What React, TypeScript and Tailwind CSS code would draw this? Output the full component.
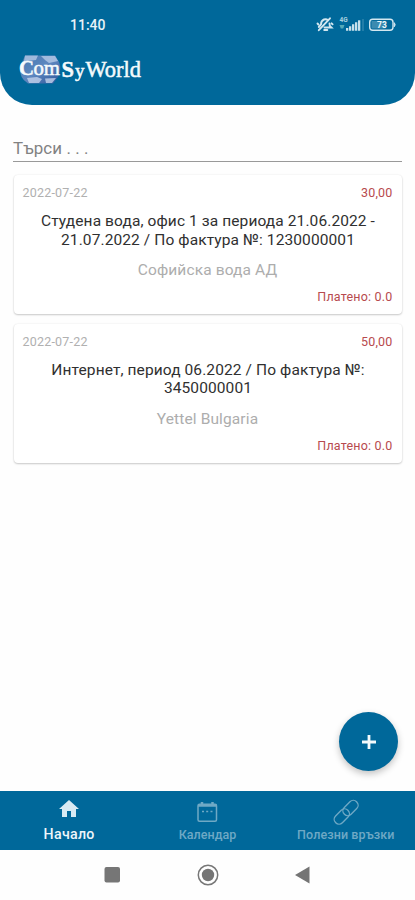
import React from "react";

type Bill = { date: string; amount: string; lines: string[]; company: string; paid: string };

const bills: Bill[] = [
  {
    date: "2022-07-22",
    amount: "30,00",
    lines: ["Студена вода, офис 1 за периода 21.06.2022 -", "21.07.2022 / По фактура №: 1230000001"],
    company: "Софийска вода АД",
    paid: "Платено: 0.0",
  },
  {
    date: "2022-07-22",
    amount: "50,00",
    lines: ["Интернет, период 06.2022 / По фактура №:", "3450000001"],
    company: "Yettel Bulgaria",
    paid: "Платено: 0.0",
  },
];

function StatusIcons() {
  return (
    <svg width="82" height="20" viewBox="0 0 82 20" fill="none">
      <g stroke="#d3e7f0" strokeWidth="1.900" strokeLinecap="round">
        <path d="M3.800 12 L6 9.500 C6 7 7 5.300 9 4.500 C10.500 4 12 4.300 13 5.200" />
        <path d="M14.500 8.500 L14.800 10.800 L16.500 12.500 H9.500" />
        <path d="M3.800 15.200 L15 3.300" />
        <path d="M2.500 8.500 L3.400 9.500 M16.600 8.300 L17.600 9.300 M9.200 15 H12.300" />
      </g>
      <g fill="#c7e1ec">
        <text x="24.500" y="7" fontSize="6.500" fontFamily="Roboto, sans-serif" fontWeight="700" opacity="0.85">4G</text>
        <path d="M24.500 10h5l-1.300 3.500h-2.400z" fill="#55a9b8" />
        <path d="M31 13h2.300v2.800h-2.300zM34 11.200h2.300v4.600h-2.300zM37 9.300h2.300v6.500h-2.300zM40 7.300h2.300v8.500h-2.300z" />
        <path d="M43 5.300h2.300v10.500h-2.300z" />
        <path d="M47.500 4h1v12h-1z" opacity="0.35" />
      </g>
      <rect x="54.700" y="4.200" width="23.300" height="11" rx="3" stroke="#d3e7f0" strokeWidth="1.400" />
      <path d="M56.500 5.900h14v7.600h-14z" fill="#3c8bb0" />
      <path d="M79.300 7.700 Q81 9.700 79.300 11.700z" fill="#d3e7f0" stroke="#d3e7f0" />
      <text x="62" y="12.900" fontSize="8.500" fontWeight="700" fontFamily="Roboto, sans-serif" fill="#eef7fb">73</text>
    </svg>
  );
}

function Logo() {
  return (
    <svg width="126" height="34" viewBox="0 0 126 34" className="block">
      <defs>
        <linearGradient id="globe" x1="0" y1="0" x2="1" y2="1">
          <stop offset="0" stopColor="#4479b0" />
          <stop offset="0.5" stopColor="#5f88c0" />
          <stop offset="1" stopColor="#2b5499" />
        </linearGradient>
      </defs>
      <path d="M7 2.500 H37 L41 9 Q44 16 40 24 L35 30.500 H10 Q1 25 2 14 Z" fill="url(#globe)" />
      <path d="M7 2.500 H20 L18 7 L10 8 L5 13 Z M23 3 H37 L40 8 L31 10 L27 7 Z" fill="#b9cdea" opacity="0.75" />
      <path d="M9 25 L19 24 L24 26 L21 30 H11Z M27 25.500 L38 25 L34 30 H28Z" fill="#cbd8ef" opacity="0.75" />
      <g fontFamily="'Liberation Serif', serif" fill="#f5fafc" stroke="#f5fafc" strokeWidth="0.500">
        <text x="1" y="21.800" fontSize="22" fontWeight="700" textLength="15" lengthAdjust="spacingAndGlyphs">C</text>
        <text x="15.500" y="21.800" fontSize="20" textLength="26.500" lengthAdjust="spacingAndGlyphs">om</text>
        <text x="43.500" y="24.300" fontSize="24" fontWeight="700" textLength="12.500" lengthAdjust="spacingAndGlyphs">S</text>
        <text x="57" y="24.300" fontSize="18" textLength="9.500" lengthAdjust="spacingAndGlyphs">y</text>
        <text x="67.500" y="24.300" fontSize="23" textLength="55.500" lengthAdjust="spacingAndGlyphs">World</text>
      </g>
    </svg>
  );
}

function BillCard({ bill }: { bill: Bill }) {
  return (
    <article className="flex h-[139px] flex-col rounded-[4px] bg-white px-[9px] pt-[10px] shadow-[0_1px_2px_rgba(0,0,0,0.20),0_0_2px_rgba(0,0,0,0.08)]">
      <div className="flex h-4 items-center justify-between text-[12.500px] leading-4">
        <span className="tracking-[0.200px] text-[#b0b0b0]">{bill.date}</span>
        <span className="tracking-[0.200px] text-[#b74a4e]">{bill.amount}</span>
      </div>
      <h2 className="mt-[11px] text-center text-[15.500px] leading-[18.500px] tracking-[0.100px] text-[#303030]">
        {bill.lines.map((line) => (
          <span key={line} className="relative left-[0.500px] block whitespace-nowrap">{line}</span>
        ))}
      </h2>
      <p className="mt-[11px] text-center text-[15.500px] leading-[20px] tracking-[0.120px] text-[#adadad]">{bill.company}</p>
      <p className="mt-[9px] text-right text-[12.500px] leading-4 tracking-[0.200px] text-[#b74a4e]">{bill.paid}</p>
    </article>
  );
}

export default function App() {
  return (
    <div className="flex h-[900px] w-[415px] flex-col overflow-hidden bg-[#fefefe] font-['Roboto','Noto_Sans',sans-serif]">
      <header className="h-[104.500px] shrink-0 rounded-b-[32px] bg-[#00689a]">
        <div className="flex h-[50px] items-center justify-between pl-[70px] pr-[18px]">
          <span className="text-[14px] font-medium text-[#e8f3f8]">11:40</span>
          <StatusIcons />
        </div>
        <div className="pl-[18px] pt-[3px]"><Logo /></div>
      </header>

      <main className="flex flex-1 flex-col px-[13px]">
        <div className="mt-[32px] flex h-[25px] items-center border-b border-[#999] text-[16.900px] tracking-[0.100px] text-[#828282]">
          Търси . . .
        </div>
        <div className="mt-[13.500px] flex flex-col gap-[9.500px] px-[0.500px]">
          {bills.map((bill) => (
            <BillCard key={bill.amount} bill={bill} />
          ))}
        </div>
        <button className="mb-[20px] mr-[4px] mt-auto flex size-[59px] items-center justify-center self-end rounded-full bg-[#00689a] shadow-[0_3px_7px_rgba(0,0,0,0.24)]">
          <svg width="16" height="16" viewBox="0 0 16 16"><path d="M8 1v14M1 8h14" stroke="#f4fafc" strokeWidth="2.800" /></svg>
        </button>
      </main>

      <nav className="grid h-[59px] shrink-0 grid-cols-3 bg-[#00689a]">
        <div className="flex flex-col items-center pt-[6px] text-[#edf6fa]">
          <svg width="24" height="24" viewBox="0 0 24 24" fill="#d8eaf3"><path d="M10 20v-6h4v6h5v-8h3L12 3 2 12h3v8z" /></svg>
          <span className="mt-[4px] text-[14.200px] font-medium leading-[18px] tracking-[0.300px]">Начало</span>
        </div>
        <div className="flex flex-col items-center pt-[9px] text-[#6fa9c5]">
          <svg width="24" height="24" viewBox="0 0 24 24" fill="none" stroke="currentColor">
            <rect x="3" y="4.200" width="18.500" height="17" rx="1.500" strokeWidth="1.500" />
            <path d="M3 5.500h18.500M7 2v3M17.500 2v3" strokeWidth="2.500" />
            <path d="M7 11.500h2M11.200 11.500h2M15.500 11.500h2" strokeWidth="1.600" />
          </svg>
          <span className="mt-[2px] text-[12.500px] font-medium leading-[18px] tracking-[0.050px]">Календар</span>
        </div>
        <div className="flex flex-col items-center pt-[7px] text-[#6fa9c5]">
          <svg width="28" height="28" viewBox="0 0 28 28" fill="none" stroke="currentColor" strokeWidth="1.350">
            <rect x="-8.700" y="-4.800" width="17.400" height="9.600" rx="4.700" transform="translate(18.500 10) rotate(-45)" />
            <rect x="-8.700" y="-4.800" width="17.400" height="9.600" rx="4.700" transform="translate(9.800 18.500) rotate(-45)" />
          </svg>
          <span className="whitespace-nowrap text-[12.500px] font-medium leading-[18px] tracking-[0.100px]">Полезни връзки</span>
        </div>
      </nav>

      <footer className="flex h-[50px] shrink-0 items-center justify-between bg-[#fefefe] pl-[104px] pr-[105px]">
        <svg width="16" height="16" viewBox="0 0 16 16"><rect x="0.500" width="15.500" height="15.500" rx="2" fill="#767676" /></svg>
        <svg width="22" height="22" viewBox="0 0 22 22"><circle cx="11" cy="11" r="9.700" fill="none" stroke="#777" strokeWidth="1.500" /><circle cx="11" cy="11" r="6.200" fill="#747474" /></svg>
        <svg width="15" height="18" viewBox="0 0 15 18"><path d="M0 9 14.500 0.500v17z" fill="#747474" /></svg>
      </footer>
    </div>
  );
}
